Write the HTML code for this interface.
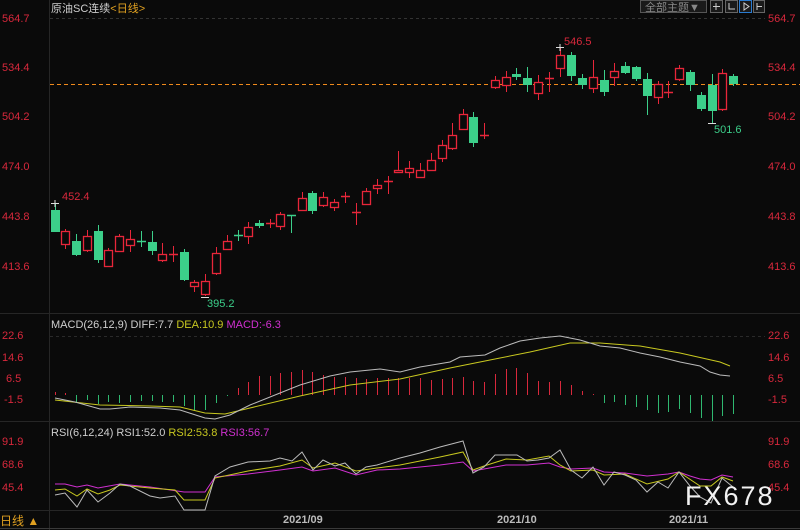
<!DOCTYPE html>
<html><head><meta charset="utf-8"><style>
html,body{margin:0;padding:0;background:#0a0a0a;width:800px;height:530px;overflow:hidden}
svg{display:block}
text{font-family:"Liberation Sans","Noto Sans CJK SC",sans-serif}
</style></head><body>
<svg id="s" width="800" height="530" xmlns="http://www.w3.org/2000/svg">
<rect width="800" height="530" fill="#0a0a0a"/>
<line x1="49.5" y1="0" x2="49.5" y2="530" stroke="#262626"/>
<line x1="0" y1="313.5" x2="800" y2="313.5" stroke="#262626"/>
<line x1="0" y1="421.5" x2="800" y2="421.5" stroke="#262626"/>
<line x1="0" y1="510.5" x2="800" y2="510.5" stroke="#262626"/>
<line x1="0" y1="528.5" x2="800" y2="528.5" stroke="#3a3a3a"/>
<line x1="50" y1="18.5" x2="765" y2="18.5" stroke="#333" stroke-dasharray="3,3"/>
<line x1="50" y1="336.5" x2="765" y2="336.5" stroke="#2a2a2a" stroke-dasharray="3,3"/>
<line x1="50" y1="84.5" x2="800" y2="84.5" stroke="#f08a1c" stroke-dasharray="4,3"/>
<text x="51" y="12" font-size="11" fill="#cfcfcf">原油SC连续<tspan fill="#e0a020">&lt;日线&gt;</tspan></text>
<rect x="640.5" y="0.5" width="66" height="12" fill="#1a1a1a" stroke="#555"/>
<text x="645" y="11" font-size="11" fill="#888">全部主题▼</text>
<rect x="710.5" y="0.5" width="12" height="12" fill="#1a1a1a" stroke="#666"/>
<rect x="725.5" y="0.5" width="12" height="12" fill="#1a1a1a" stroke="#666"/>
<rect x="739.5" y="0.5" width="12" height="12" fill="#1a1a1a" stroke="#2a7bd0"/>
<rect x="753.5" y="0.5" width="11" height="12" fill="#1a1a1a" stroke="#666"/>
<path d="M716 3v7M713 6.5h7M729 3v6h6M744 3v7l5-3.5z M757 3v7M757 6.5h5" stroke="#ccc" fill="none"/>
<g font-size="11" fill="#d8283c">
<text x="2" y="22">564.7</text><text x="2" y="71">534.4</text><text x="2" y="120">504.2</text>
<text x="2" y="170">474.0</text><text x="2" y="220">443.8</text><text x="2" y="270">413.6</text>
<text x="768" y="22">564.7</text><text x="768" y="71">534.4</text><text x="768" y="120">504.2</text>
<text x="768" y="170">474.0</text><text x="768" y="220">443.8</text><text x="768" y="270">413.6</text>
<text x="2" y="339">22.6</text><text x="2" y="361">14.6</text><text x="6" y="382">6.5</text><text x="4" y="403">-1.5</text>
<text x="768" y="339">22.6</text><text x="768" y="361">14.6</text><text x="768" y="382">6.5</text><text x="768" y="403">-1.5</text>
<text x="2" y="445">91.9</text><text x="2" y="468">68.6</text><text x="2" y="491">45.4</text>
<text x="768" y="445">91.9</text><text x="768" y="468">68.6</text><text x="768" y="491">45.4</text>
<text x="62" y="200" font-size="11">452.4</text>
<text x="564" y="45" font-size="11">546.5</text>
</g>
<text x="207" y="307" font-size="11" fill="#3ccf8a">395.2</text>
<text x="714" y="133" font-size="11" fill="#3ccf8a">501.6</text>
<g id="c"></g>
<text x="51" y="328" font-size="11" fill="#cfcfcf">MACD(26,12,9) DIFF:7.7 <tspan fill="#c8c820">DEA:10.9</tspan> <tspan fill="#d030d0">MACD:-6.3</tspan></text>
<text x="51" y="436" font-size="11" fill="#cfcfcf">RSI(6,12,24) RSI1:52.0 <tspan fill="#c8c820">RSI2:53.8</tspan> <tspan fill="#d030d0">RSI3:56.7</tspan></text>
<polyline fill="none" stroke="#c8c820" stroke-width="1" points="55,400 100,405 150,406 180,407 205,413 225,414 250,408 300,396 350,385 400,379 450,368 500,358 530,352 570,343 600,343 640,346 680,353 720,362 730,366"/>
<polyline fill="none" stroke="#bbb" stroke-width="1" points="55,398 75,402 100,409 110,409 130,407 160,408 180,410 205,418 215,419 230,415 250,405 280,393 300,385 330,376 350,372 380,369 400,372 420,367 450,362 460,357 485,355 500,348 520,341 540,338 560,336 580,340 600,346 620,348 640,353 660,357 680,362 700,366 710,372 720,375 730,376"/>
<polyline fill="none" stroke="#d030d0" points="55,484 65,484 77,487 87,485 98,488 120,484 150,487 184,492 205,492 215,477 248,474 280,470 302,467 313,471 335,468 356,475 377,470 400,469 440,465 463,462 473,471 484,469 506,465 527,465 549,463 560,467 571,469 593,468 604,472 625,473 647,476 668,474 679,472 690,476 700,479 711,480 722,475 733,477"/>
<polyline fill="none" stroke="#c8c820" points="55,490 65,489 77,496 87,489 98,494 110,490 120,485 150,488 175,490 184,500 205,500 215,478 248,471 280,466 302,460 313,468 335,463 356,471 377,468 400,465 440,457 463,452 473,470 484,466 506,459 527,460 549,456 560,465 571,471 593,470 604,475 625,474 647,484 668,479 679,472 700,486 711,486 722,477 733,481"/>
<polyline fill="none" stroke="#bbb" points="55,495 65,493 77,507 87,490 98,502 110,493 120,484 130,486 150,496 160,498 175,496 184,510 205,510 215,476 230,467 248,462 270,461 280,458 292,461 302,452 313,470 323,460 335,466 345,463 356,474 366,467 377,465 400,458 420,453 440,447 463,441 473,473 484,467 495,455 506,455 517,455 527,461 538,460 549,458 560,450 571,470 582,478 593,467 604,485 614,472 625,475 636,480 647,492 658,482 668,488 679,472 690,486 700,497 711,503 722,478 733,487"/>
<text x="0" y="525" font-size="12" fill="#e0a020">日线 ▲</text>
<g font-size="11" fill="#bbb" font-weight="bold">
<text x="283" y="523">2021/09</text><text x="497" y="523">2021/10</text><text x="669" y="523">2021/11</text>
</g>
<text x="685" y="505" font-size="27" fill="#f2f2f2" letter-spacing="2">FX678</text>
</svg>
<script>
var R="#e8263a",G="#3ccf8a";
var d=[[55,'g',210,232,203,232],[65,'r',231,244,229,249],[76,'g',241,255,234,256],[87,'r',236,250,230,252],[98,'g',231,260,225,263],[108,'r',250,266,248,267],[119,'r',236,251,234,252],[130,'r',239,245,230,252],[141,'g',241,241,231,247],[152,'g',242,251,231,255],[162,'r',254,260,243,262],[173,'r',254,254,246,262],[184,'g',252,280,249,281],[194,'r',282,286,280,292],[205,'r',281,294,274,296],[216,'r',253,273,247,275],[227,'r',241,249,235,250],[238,'g',235,235,230,241],[248,'r',227,236,222,244],[259,'g',223,226,220,228],[270,'r',223,223,219,228],[280,'r',214,226,212,230],[291,'g',215,215,215,233],[302,'r',198,210,192,210],[312,'g',193,211,191,214],[323,'r',197,205,192,207],[334,'r',202,207,199,211],[345,'r',196,196,192,203],[356,'r',212,212,203,225],[366,'r',191,204,188,205],[377,'r',185,188,179,194],[388,'r',181,181,176,194],[398,'r',170,172,151,172],[409,'r',168,172,161,178],[420,'r',170,177,163,178],[431,'r',160,170,153,171],[442,'r',145,158,140,162],[452,'r',135,148,123,150],[463,'r',114,129,109,130],[473,'g',117,143,112,147],[484,'r',135,135,123,139],[495,'r',80,87,76,89],[506,'r',77,85,71,92],[516,'g',74,77,68,80],[527,'g',78,85,67,92],[538,'r',82,93,75,100],[549,'r',78,78,72,92],[560,'r',55,68,47,77],[571,'g',55,76,52,81],[582,'g',78,85,74,89],[593,'r',77,88,60,93],[604,'g',80,92,70,96],[614,'r',71,77,63,86],[625,'g',66,73,62,74],[636,'g',67,79,66,81],[647,'g',79,96,73,115],[658,'r',84,97,81,104],[668,'r',92,92,81,98],[679,'r',68,79,65,81],[690,'g',72,85,70,91],[701,'g',95,109,92,111],[712,'g',85,111,74,123],[722,'r',73,109,69,111],[733,'g',76,84,74,86]];
var h=[[55,392],[65,393],[76,402],[87,400],[98,404],[108,402],[119,403],[130,402],[141,401],[152,401],[162,402],[173,402],[184,406],[194,410],[205,410],[216,403],[227,396],[238,388],[248,382],[259,376],[270,376],[280,373],[291,372],[302,370],[312,372],[323,375],[334,377],[345,377],[356,378],[366,379],[377,378],[388,378],[398,378],[409,378],[420,378],[431,380],[442,379],[452,378],[463,377],[473,381],[484,382],[495,374],[506,369],[516,368],[527,373],[538,381],[549,382],[560,381],[571,385],[582,391],[593,394],[604,403],[614,402],[625,405],[636,407],[647,410],[658,413],[668,412],[679,409],[690,413],[701,418],[712,421],[722,416],[733,414]];
var s="";
d.forEach(function(c){var x=c[0],col=c[1]=='r'?R:G;
s+='<line x1="'+(x+.5)+'" y1="'+c[4]+'" x2="'+(x+.5)+'" y2="'+c[5]+'" stroke="'+col+'"/>';
var hgt=c[3]-c[2];
if(hgt<1){s+='<line x1="'+(x-4)+'" y1="'+(c[2]+.5)+'" x2="'+(x+5)+'" y2="'+(c[2]+.5)+'" stroke="'+col+'" stroke-width="1.5"/>';}
else if(c[1]=='r'){s+='<rect x="'+(x-3.5)+'" y="'+(c[2]+.5)+'" width="8" height="'+hgt+'" fill="#0a0a0a" stroke="'+col+'" stroke-width="1.3"/>';}
else{s+='<rect x="'+(x-4)+'" y="'+c[2]+'" width="9" height="'+hgt+'" fill="'+col+'"/>';}
});
h.forEach(function(b){var col=b[1]<395?"#d8283c":"#2fb870";s+='<line x1="'+(b[0]+.5)+'" y1="395" x2="'+(b[0]+.5)+'" y2="'+b[1]+'" stroke="'+col+'"/>';});
s+='<path d="M51 203.5h8M55 200v7M556 47.5h8M560 44v7M201 297.5h8M708 123.5h8" stroke="#ddd"/>';
document.getElementById("c").innerHTML=s;
</script>
</body></html>
